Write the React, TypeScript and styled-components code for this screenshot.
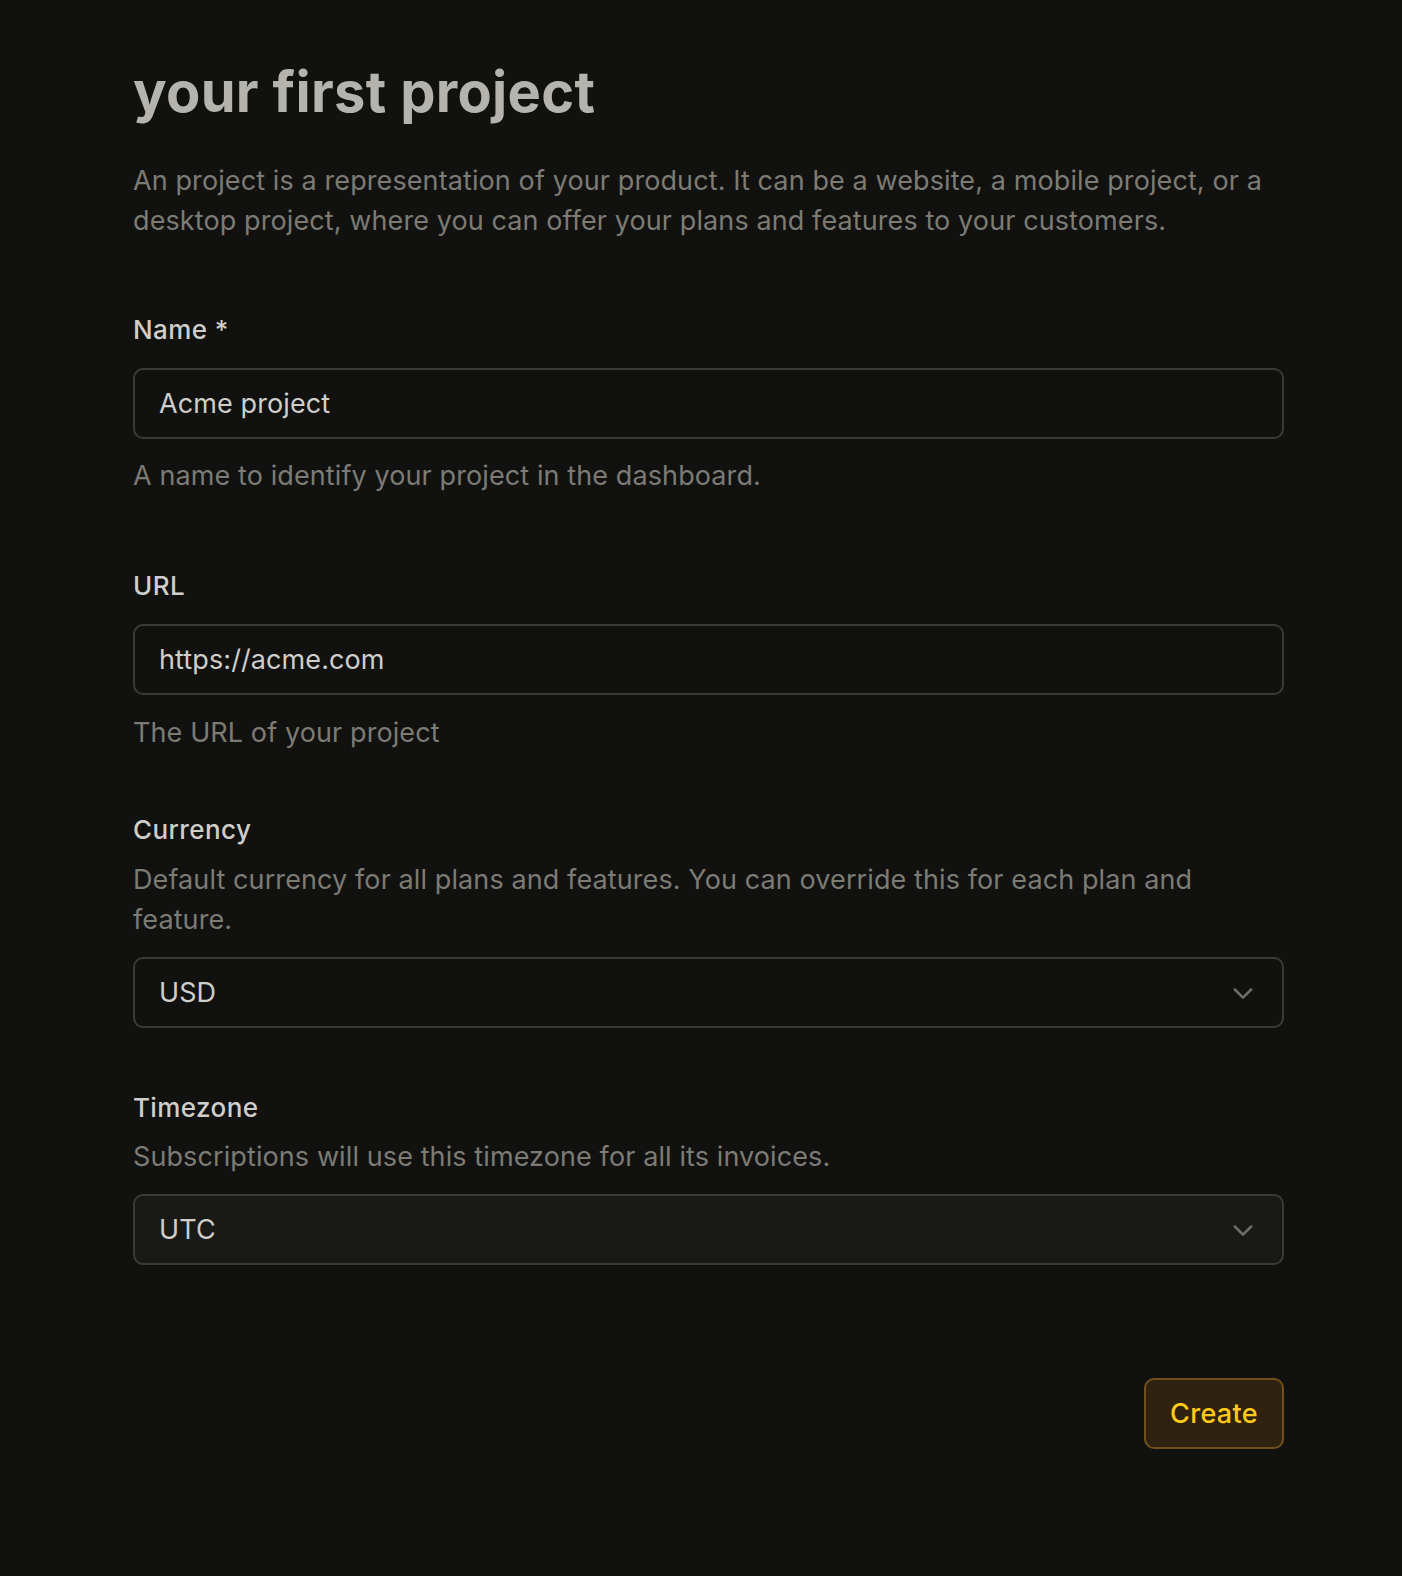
import React from "react";
import styled, { createGlobalStyle } from "styled-components";

const Global = createGlobalStyle`
  html, body { margin: 0; padding: 0; background: #111110; }
  body { font-family: Inter, "Noto Sans", "Liberation Sans", sans-serif; min-height: 1576px; }
  * { box-sizing: border-box; }
`;

const Page = styled.main`
  width: 1151px;
  margin-left: 133px;
  padding-top: 60px;
  padding-bottom: 129px;
  display: flex;
  flex-direction: column;
`;

const Title = styled.h1`
  margin: 0;
  font-size: 56px;
  line-height: 64px;
  font-weight: 700;
  letter-spacing: 0.3px;
  color: #b5b3ad;
`;

const Lead = styled.p`
  margin: 37px 0 0;
  font-size: 27px;
  line-height: 40px;
  letter-spacing: 0.1px;
  color: #7c7b74;
`;

const Field = styled.section<{ $top: number }>`
  margin-top: ${(p) => p.$top}px;
  display: flex;
  flex-direction: column;
`;

const Label = styled.label`
  font-size: 26px;
  line-height: 32px;
  font-weight: 500;
  letter-spacing: 0.4px;
  color: #cfceca;
`;

const Hint = styled.p<{ $top: number }>`
  margin: ${(p) => p.$top}px 0 0;
  font-size: 27px;
  line-height: 40px;
  letter-spacing: 0.1px;
  color: #7c7b74;
`;

const Box = styled.div<{ $top: number; $hover?: boolean }>`
  margin-top: ${(p) => p.$top}px;
  height: 71px;
  border: 2px solid #3b3a37;
  border-radius: 10px;
  background: ${(p) => (p.$hover ? "#191918" : "#111110")};
  display: flex;
  align-items: center;
  justify-content: space-between;
  padding: 0 25px 0 24px;
  font-size: 27px;
  letter-spacing: 0.1px;
  color: #cfceca;
`;

const Footer = styled.div`
  margin-top: 113px;
  display: flex;
  justify-content: flex-end;
`;

const Button = styled.button`
  width: 140px;
  height: 71px;
  border: 2px solid #71501e;
  border-radius: 10px;
  background: #302210;
  color: #ffca16;
  font-family: inherit;
  font-size: 27px;
  font-weight: 500;
  letter-spacing: 0.3px;
`;

const Chevron = () => (
  <svg width="28" height="28" viewBox="0 0 24 24" fill="none" stroke="#6f6d66" strokeWidth="2.2" strokeLinecap="round" strokeLinejoin="round">
    <path d="M5 9l7 7 7-7" />
  </svg>
);

export default function App() {
  return (
    <>
      <Global />
      <Page>
        <Title>your first project</Title>
        <Lead>
          An project is a representation of your product. It can be a website, a mobile project, or a desktop project, where you can offer your plans and features to your customers.
        </Lead>

        <Field $top={73}>
          <Label>Name *</Label>
          <Box $top={22}>Acme project</Box>
          <Hint $top={17}>A name to identify your project in the dashboard.</Hint>
        </Field>

        <Field $top={74}>
          <Label>URL</Label>
          <Box $top={22}>https://acme.com</Box>
          <Hint $top={18}>The URL of your project</Hint>
        </Field>

        <Field $top={61}>
          <Label>Currency</Label>
          <Hint $top={14}>Default currency for all plans and features. You can override this for each plan and feature.</Hint>
          <Box $top={17}>
            USD
            <Chevron />
          </Box>
        </Field>

        <Field $top={64}>
          <Label>Timezone</Label>
          <Hint $top={13}>Subscriptions will use this timezone for all its invoices.</Hint>
          <Box $top={17} $hover>
            UTC
            <Chevron />
          </Box>
        </Field>

        <Footer>
          <Button type="button">Create</Button>
        </Footer>
      </Page>
    </>
  );
}
